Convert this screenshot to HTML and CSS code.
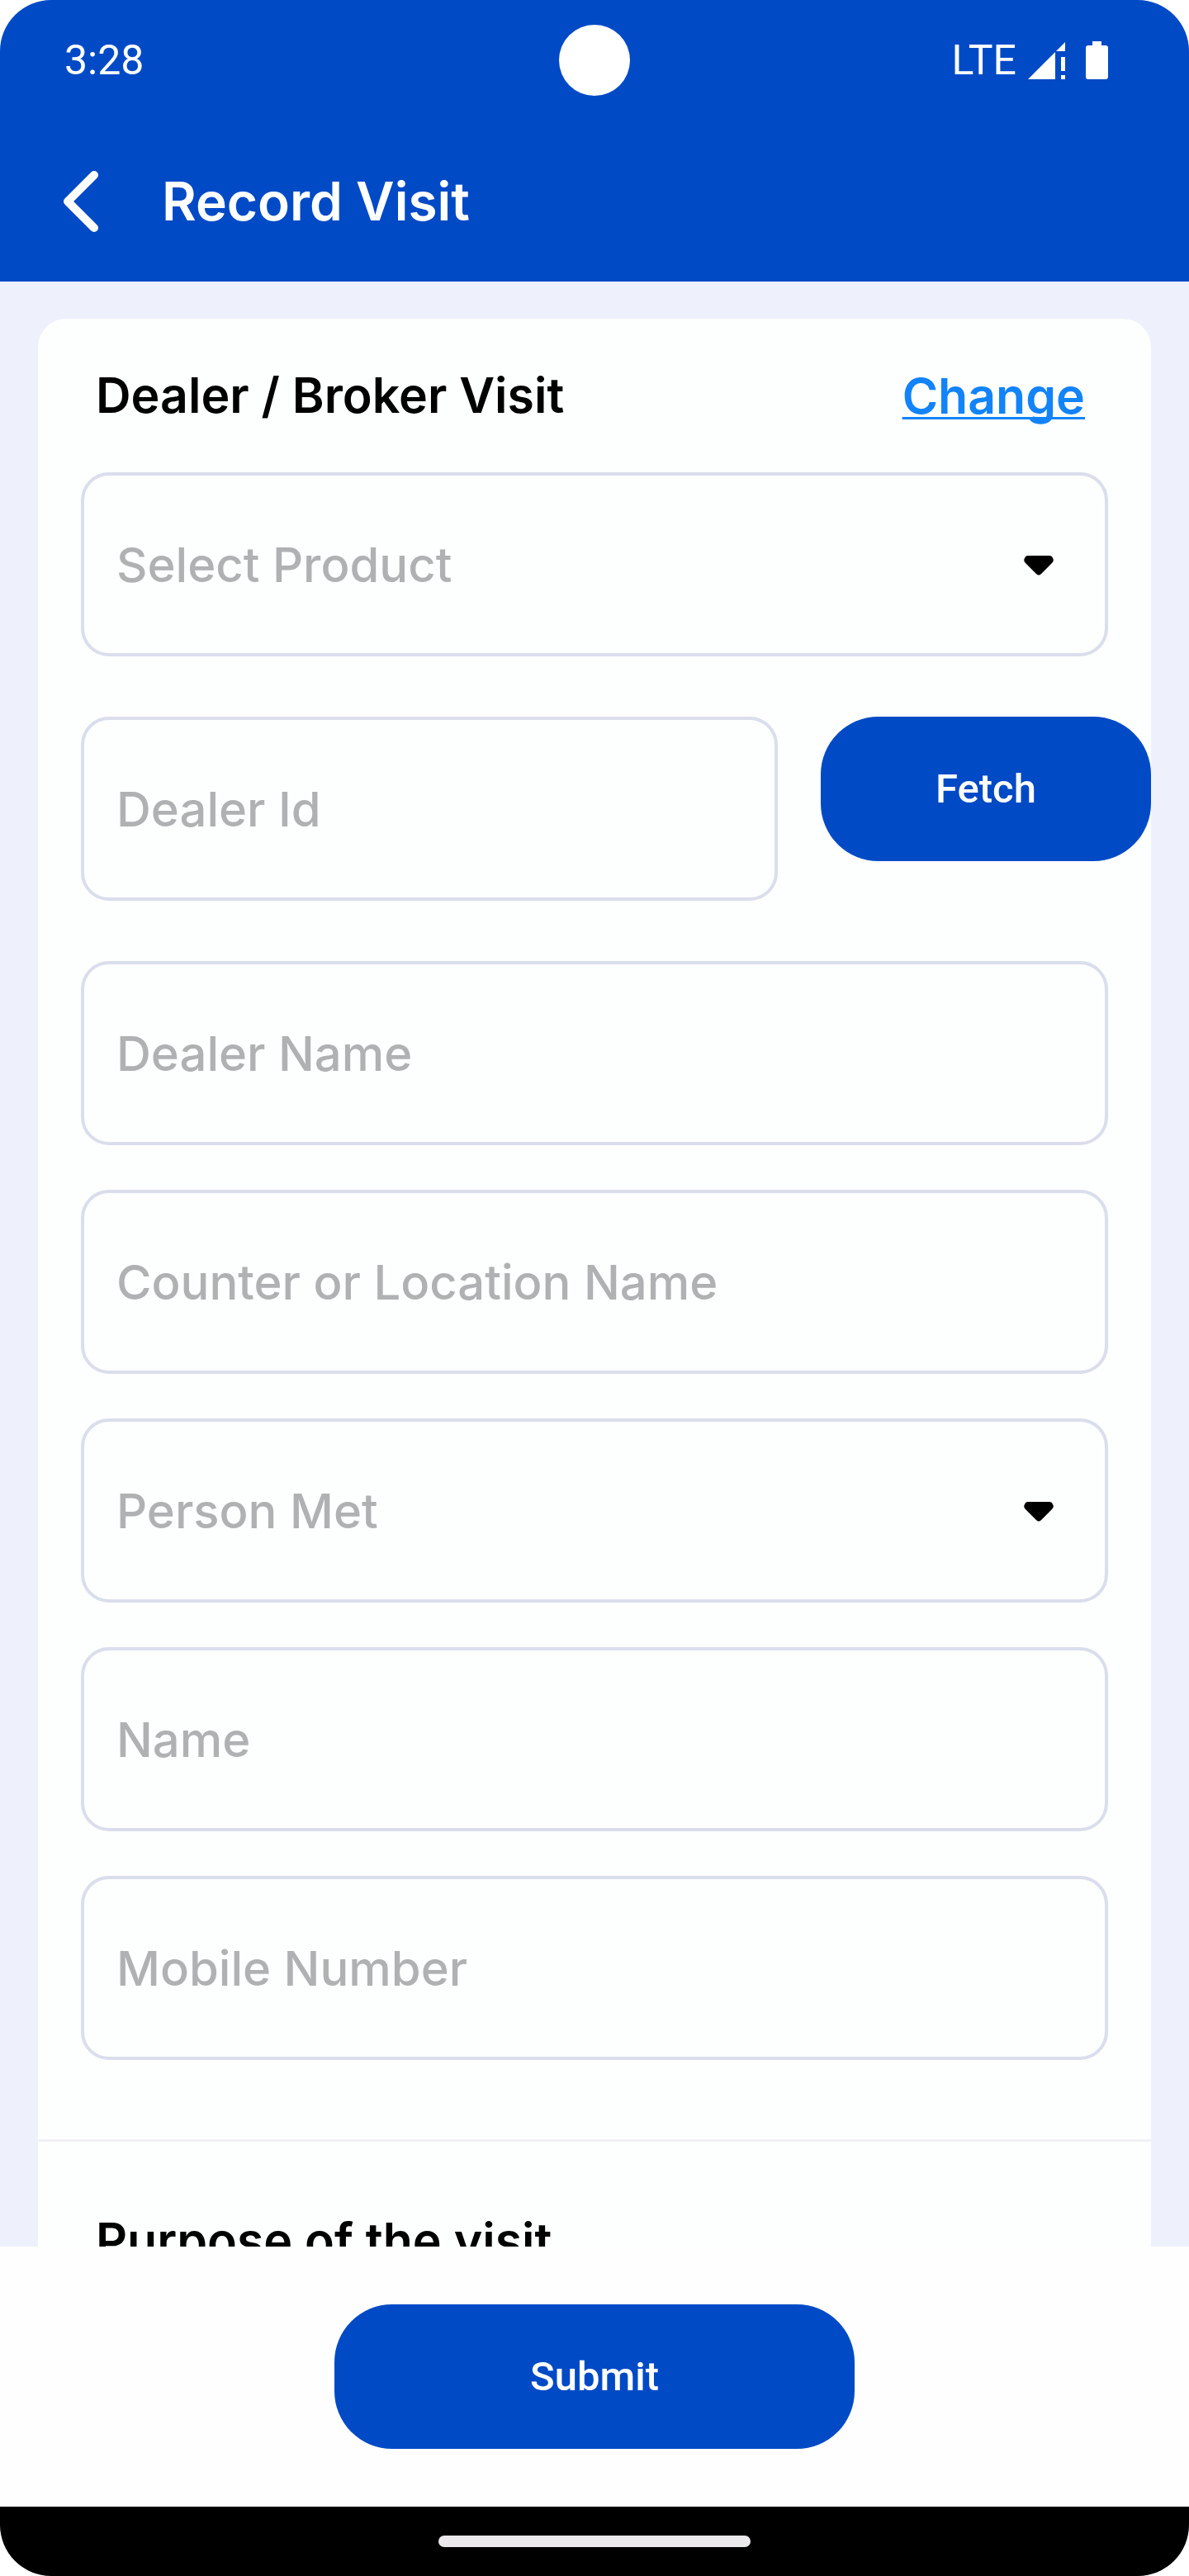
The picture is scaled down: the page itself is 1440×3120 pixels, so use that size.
FILE: index.html
```html
<!DOCTYPE html>
<html lang="en">
	<head>
		<meta charset="UTF-8">
		<meta name="viewport" content="width=device-width, initial-scale=1">
		<title>Record Visit</title>
		<link rel="stylesheet" href="styles.css">
	</head>
	<body>
		<div class="screen">
			<header class="header">
				<div class="status">
					<span class="time">3:28</span>
					<span class="camera"></span>
					<div class="status_icons">
						<span>LTE</span>
						<svg class="signal" viewBox="0 0 45 45" width="45" height="45">
							<path d="M0 45L33 12V45Z M34 11L45 0V11Z M40 18H45V35H40Z M40 40H45V45H40Z"/>
						</svg>
						<svg class="battery" viewBox="0 0 27 46" width="27" height="46">
							<path d="M8 0H19V5H24Q27 5 27 8V43Q27 46 24 46H3Q0 46 0 43V8Q0 5 3 5H8Z"/>
						</svg>
					</div>
				</div>
				<div class="title_bar">
					<button type="button" class="back" aria-label="Back">
						<svg viewBox="0 0 44 76" width="44" height="76">
							<path d="M38 6L6 38L38 70"/>
						</svg>
					</button>
					<h1>Record Visit</h1>
				</div>
			</header>

			<main class="content">
				<form class="card" id="visit">
					<div class="card_head">
						<h2>Dealer / Broker Visit</h2>
						<a href="#">Change</a>
					</div>

					<div class="fields">
						<div class="select_box">
							<select class="field" aria-label="Select Product">
								<option>Select Product</option>
							</select>
							<svg class="arrow" viewBox="0 0 36 24" width="36" height="24">
								<path d="M5 0H31Q34 0 35 3Q37 6 34 9L21 22Q18 25 15 22L2 9Q-1 6 1 3Q2 0 5 0Z"/>
							</svg>
						</div>

						<div class="dealer_row">
							<input class="field" type="text" placeholder="Dealer Id" aria-label="Dealer Id">
							<button type="button" class="btn fetch">Fetch</button>
						</div>

						<div class="field_list">
							<input class="field" type="text" placeholder="Dealer Name" aria-label="Dealer Name">
							<input class="field" type="text" placeholder="Counter or Location Name" aria-label="Counter or Location Name">
							<div class="select_box">
								<select class="field" aria-label="Person Met">
									<option>Person Met</option>
								</select>
								<svg class="arrow" viewBox="0 0 36 24" width="36" height="24">
									<path d="M5 0H31Q34 0 35 3Q37 6 34 9L21 22Q18 25 15 22L2 9Q-1 6 1 3Q2 0 5 0Z"/>
								</svg>
							</div>
							<input class="field" type="text" placeholder="Name" aria-label="Name">
							<input class="field" type="tel" placeholder="Mobile Number" aria-label="Mobile Number">
						</div>
					</div>

					<div class="purpose">
						<h2>Purpose of the visit</h2>
					</div>
				</form>
			</main>

			<footer class="footer">
				<button type="submit" form="visit" class="btn submit">Submit</button>
			</footer>
			<div class="nav_bar"><span></span></div>
		</div>
	</body>
</html>
```

FILE: styles.css
```css
* {
	margin: 0;
	padding: 0;
	box-sizing: border-box;
}
body {
	background: #fff;
	font-family: Inter, "Open Sans", sans-serif;
}
svg {
	display: block;
	flex: none;
}
.screen {
	display: flex;
	flex-direction: column;
	height: 100vh;
	overflow: hidden;
	border-radius: 62px;
	background: #eef0fb;
}

/* top */
.header {
	flex: none;
	background: #004ac6;
	color: #fff;
}
.status {
	display: grid;
	grid-template-columns: 1fr auto 1fr;
	align-items: center;
	height: 146px;
	padding: 0 78px;
	font-family: Roboto, sans-serif;
	font-size: 50px;
}
.camera {
	width: 86px;
	height: 86px;
	border-radius: 50%;
	background: #fff;
}
.status_icons {
	display: flex;
	justify-content: flex-end;
	align-items: center;
	padding-right: 20px;
}
.status svg {
	fill: #fff;
}
.signal {
	margin: 0 25px 0 14px;
}
.title_bar {
	display: flex;
	align-items: center;
	gap: 76px;
	height: 195px;
	padding: 0 76px;
}
.back {
	border: 0;
	background: none;
}
.back path {
	fill: none;
	stroke: #fff;
	stroke-width: 10;
	stroke-linecap: round;
	stroke-linejoin: round;
}
h1 {
	font-size: 64px;
	font-weight: 600;
}

/* form */
.content {
	flex: 1;
	min-height: 0;
	overflow: hidden;
	padding: 45px 46px 0;
}
.card {
	border-radius: 34px;
	background: #fdfefe;
}
.card_head {
	display: flex;
	justify-content: space-between;
	align-items: center;
	height: 186px;
	padding: 0 80px 0 70px;
}
h2 {
	font-size: 59px;
	font-weight: 600;
	line-height: 72px;
}
.card_head a {
	color: #1283f8;
	font-size: 59px;
	font-weight: 600;
	text-decoration-thickness: 3px;
	text-underline-offset: 4px;
	text-decoration-skip-ink: none;
}
.fields {
	display: flex;
	flex-direction: column;
	gap: 73px;
	padding: 0 52px 96px;
}
.field_list {
	display: flex;
	flex-direction: column;
	gap: 54px;
}
.field {
	display: block;
	width: 100%;
	height: 223px;
	padding: 0 39px;
	border: 4px solid #dadeec;
	border-radius: 34px;
	background: transparent;
	color: #b0b1b3;
	font-family: inherit;
	font-size: 58px;
	font-weight: 500;
	appearance: none;
}
.field::placeholder {
	color: #b0b1b3;
	opacity: 1;
}
.select_box {
	position: relative;
}
.arrow {
	position: absolute;
	top: 50%;
	right: 66px;
	margin-top: -11px;
	pointer-events: none;
}
.dealer_row {
	display: flex;
	align-items: flex-start;
	gap: 52px;
	/* the button reaches the edge of the card */
	margin-right: -52px;
}
.dealer_row .field {
	flex: 1;
	min-width: 0;
}
.btn {
	height: 175px;
	border: 0;
	border-radius: 70px;
	background: #004ac6;
	color: #fff;
	font-family: Roboto, sans-serif;
	font-size: 49px;
	font-weight: 500;
}
.fetch {
	width: 400px;
}
.purpose {
	padding: 84px 70px;
	border-top: 3px solid #f0f0f6;
}

/* bottom */
.footer {
	flex: none;
	display: flex;
	justify-content: center;
	padding: 70px;
	background: #fefefe;
}
.submit {
	width: 630px;
}
.nav_bar {
	flex: none;
	display: flex;
	justify-content: center;
	align-items: center;
	height: 84px;
	background: #000;
}
.nav_bar span {
	width: 378px;
	height: 14px;
	border-radius: 7px;
	background: #ebe9eb;
}
```
